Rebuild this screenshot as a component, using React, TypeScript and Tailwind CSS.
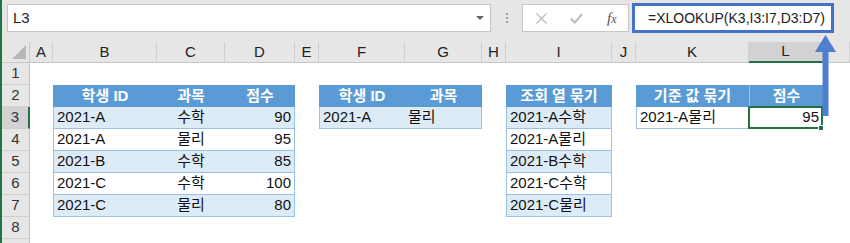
import React from 'react';

const FONT = "font-['Liberation_Sans','Noto_Sans_CJK_KR',sans-serif]";

const COLS = ['A', 'B', 'C', 'D', 'E', 'F', 'G', 'H', 'I', 'J', 'K', 'L', 'M'];

type Align = 'l' | 'c' | 'r';

interface Table {
  cols: string[];
  head: string[];
  align: Align[];
  rows: string[][];
  plain?: boolean;
}

const tables: Table[] = [
  {
    cols: ['B', 'C', 'D'],
    head: ['학생 ID', '과목', '점수'],
    align: ['l', 'c', 'r'],
    rows: [
      ['2021-A', '수학', '90'],
      ['2021-A', '물리', '95'],
      ['2021-B', '수학', '85'],
      ['2021-C', '수학', '100'],
      ['2021-C', '물리', '80'],
    ],
  },
  {
    cols: ['F', 'G'],
    head: ['학생 ID', '과목'],
    align: ['l', 'l'],
    rows: [['2021-A', '물리']],
  },
  {
    cols: ['I'],
    head: ['조회 열 묶기'],
    align: ['l'],
    rows: [['2021-A수학'], ['2021-A물리'], ['2021-B수학'], ['2021-C수학'], ['2021-C물리']],
  },
  {
    cols: ['K', 'L'],
    head: ['기준 값 묶기', '점수'],
    align: ['l', 'r'],
    rows: [['2021-A물리', '95']],
    plain: true,
  },
];

const alignClass = (a: Align) =>
  a === 'l' ? 'justify-start pl-[3px]' : a === 'c' ? 'justify-center' : 'justify-end pr-[3px]';

function SheetCell({ row, col }: { row: number; col: string }) {
  for (const t of tables) {
    const ci = t.cols.indexOf(col);
    if (ci < 0) continue;
    const bodyIdx = row - 3;
    const first = ci === 0;
    const last = ci === t.cols.length - 1;
    if (row === 2) {
      return (
        <div
          className={`flex items-center justify-center bg-[#5b9bd5] text-white font-bold ${
            col === 'L' ? 'border-l border-[#9dc0e8]' : ''
          }`}
        >
          {t.head[ci]}
        </div>
      );
    }
    if (bodyIdx >= 0 && bodyIdx < t.rows.length) {
      const shaded = !t.plain && bodyIdx % 2 === 0;
      return (
        <div
          className={`relative flex items-center border-b border-[#9bc2e6] text-[#111] ${
            shaded ? 'bg-[#ddebf7]' : 'bg-white'
          } ${first ? 'border-l' : ''} ${last ? 'border-r' : ''} ${alignClass(t.align[ci])}`}
        >
          {t.rows[bodyIdx][ci]}
          {col === 'L' && row === 3 && (
            <div className="absolute -left-px -top-px -right-px -bottom-px border-2 border-[#217346]">
              <div className="absolute -right-[3px] -bottom-[4px] w-[6px] h-[6px] bg-[#217346] border border-white" />
            </div>
          )}
        </div>
      );
    }
  }
  return <div className="bg-white" />;
}

export default function App() {
  const rows = [1, 2, 3, 4, 5, 6, 7, 8, 9];

  return (
    <div className={`relative w-[850px] h-[243px] overflow-hidden bg-white flex ${FONT}`}>
      <div className="w-[2px] shrink-0 bg-[#217346]" />
      <div className="flex-1 flex flex-col">
        {/* Formula bar */}
        <div className="h-[42px] shrink-0 bg-[#e6e6e6] flex items-start pt-[4px] pl-[5px]">
          <div className="w-[484px] h-[28px] bg-white border border-[#c6c6c6] flex items-center justify-between pl-[5px] pr-[6px] text-[15px] text-[#222]">
            <span>L3</span>
            <svg width="8" height="5" viewBox="0 0 8 5">
              <path d="M0 0 L8 0 L4 4 Z" fill="#666" />
            </svg>
          </div>
          <div className="w-[31px] h-[28px] flex items-center justify-center">
            <div className="flex flex-col gap-[2px]">
              <div className="w-[2px] h-[2px] bg-[#a0a0a0]" />
              <div className="w-[2px] h-[2px] bg-[#a0a0a0]" />
              <div className="w-[2px] h-[2px] bg-[#a0a0a0]" />
            </div>
          </div>
          <div className="w-[107px] h-[28px] bg-white border border-[#c6c6c6] flex items-center pl-[13px] gap-[23px]">
            <svg width="11" height="11" viewBox="0 0 11 11">
              <path d="M0.5 0.5 L10.5 10.5 M10.5 0.5 L0.5 10.5" stroke="#bdbdbd" strokeWidth="1.4" />
            </svg>
            <svg width="13" height="11" viewBox="0 0 13 11">
              <path d="M0.8 5.5 L4.8 9.5 L12.2 1" stroke="#bdbdbd" strokeWidth="2" fill="none" />
            </svg>
            <span className="font-['Liberation_Serif',serif] italic text-[15px] text-[#555] leading-none ml-[1px]">
              f<span className="text-[12px]">x</span>
            </span>
          </div>
          <div className="ml-[3px] -mt-[1px] w-[202px] h-[30px] bg-white border-[3px] border-[#4472c4] flex items-center pl-[13px] text-[14px] text-[#222]">
            =XLOOKUP(K3,I3:I7,D3:D7)
          </div>
        </div>

        {/* Sheet grid */}
        <div className="grid grid-cols-[28px_23px_104px_68px_70px_24px_86px_77px_24px_106px_24px_113px_74px_1fr] grid-rows-[21px_repeat(9,22px)] text-[15px]">
          <div className="relative bg-[#e6e6e6] border-r border-b border-[#c6c6c6]">
            <svg className="absolute right-[3px] bottom-[3px]" width="14" height="14" viewBox="0 0 14 14">
              <path d="M14 0 L14 14 L0 14 Z" fill="#b7b7b7" />
            </svg>
          </div>
          {COLS.map((c) => (
            <div
              key={c}
              className={`flex items-center justify-center text-[#222] ${
                c === 'L'
                  ? 'bg-[#d2d2d2] border-b-2 border-b-[#217346] border-r border-r-[#c6c6c6]'
                  : 'bg-[#e6e6e6] border-b border-b-[#c6c6c6] border-r border-r-[#d0d0d0]'
              }`}
            >
              {c === 'M' ? '' : c}
            </div>
          ))}
          {rows.map((r) => (
            <React.Fragment key={r}>
              <div
                className={`flex items-center justify-center border-b border-[#cfcfcf] text-[#333] ${
                  r === 3
                    ? 'bg-[#d2d2d2] border-r-2 border-r-[#217346]'
                    : 'bg-[#e6e6e6] border-r border-r-[#c6c6c6]'
                }`}
              >
                {r < 9 ? r : ''}
              </div>
              {COLS.map((c) => (
                <SheetCell key={c} row={r} col={c} />
              ))}
            </React.Fragment>
          ))}
        </div>
      </div>

      {/* Annotation arrow */}
      <svg className="absolute left-[813px] top-[33px]" width="26" height="86" viewBox="0 0 26 86">
        <path d="M12.5 2 L23 19 L2 19 Z" fill="#4f7fd0" />
        <rect x="9.5" y="18" width="6" height="65" fill="#4f7fd0" />
      </svg>
    </div>
  );
}
